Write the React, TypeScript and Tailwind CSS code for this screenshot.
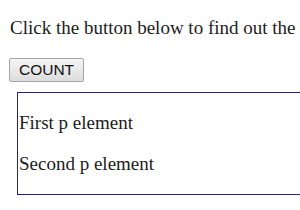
import React from "react";

export default function App() {
  return (
    <div className="w-[300px] h-[210px] overflow-hidden bg-white text-[#1c1c1c] font-['Liberation_Serif',serif] text-[19px] leading-[21px]">
      <p className="pl-[10px] pt-[17px] whitespace-nowrap">
        Click the button below to find out the number of p elements inside the div.
      </p>
      <button className="ml-[9px] mt-[20px] block w-[75px] h-[24px] rounded-[2px] border border-[#a6a6a6] bg-gradient-to-b from-[#f6f6f6] to-[#dcdcdc] font-['Liberation_Sans',sans-serif] text-[15.5px] leading-none text-[#111]">
        COUNT
      </button>
      <div className="ml-[17px] mt-[10px] w-[320px] h-[103px] border-[1.5px] border-[#27276b] pt-[19px]">
        <p className="pl-[1px]">First p element</p>
        <p className="pl-[1px] mt-[20px]">Second p element</p>
      </div>
    </div>
  );
}
